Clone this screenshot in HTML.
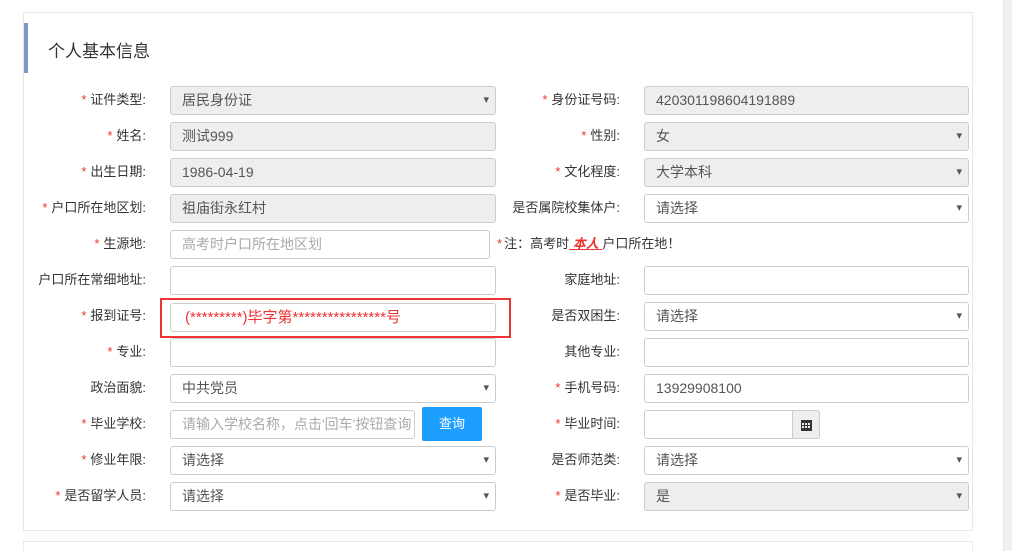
<!DOCTYPE html>
<html><head><meta charset="utf-8"><style>
*{box-sizing:border-box;margin:0;padding:0}
html,body{width:1012px;height:551px;overflow:hidden}
body{background:#fff;position:relative;font-family:"Liberation Sans","Noto Sans CJK SC","Microsoft YaHei",sans-serif;font-size:13px;color:#333}
.sb{position:absolute;left:1003px;top:0;width:9px;height:551px;background:#f1f1f1;border-left:1px solid #e4e4e4}
.panel{position:absolute;left:23px;top:12px;width:950px;height:519px;border:1px solid #e9e9e9;background:#fff}
.panel2{position:absolute;left:23px;top:541px;width:950px;height:10px;border:1px solid #e9e9e9;border-bottom:none}
.bar{position:absolute;left:24px;top:23px;width:4px;height:50px;background:#7e97c8}
.title{position:absolute;left:48px;top:37px;font-size:17px;color:#333}
.lab{position:absolute;text-align:right;line-height:20px;white-space:nowrap}
.lab i{color:#e33;font-style:normal;margin-right:4px}
.in{position:absolute;height:29px;border:1px solid #ccc;border-radius:3px;background:#fff;padding-left:11px;line-height:27px;font-size:14px;color:#555;white-space:nowrap;overflow:hidden}
.dis{background:#eee}
.sel::after{content:"▾";position:absolute;right:6px;top:0;font-size:11px;color:#555}
</style></head><body>
<div class="sb"></div>
<div class="panel"></div><div class="panel2"></div>
<div class="bar"></div><div class="title">个人基本信息</div>

<div class="lab" style="right:866px;top:90px"><i>*</i>证件类型:</div>
<div class="lab" style="right:866px;top:126px"><i>*</i>姓名:</div>
<div class="lab" style="right:866px;top:162px"><i>*</i>出生日期:</div>
<div class="lab" style="right:866px;top:198px"><i>*</i>户口所在地区划:</div>
<div class="lab" style="right:866px;top:234px"><i>*</i>生源地:</div>
<div class="lab" style="right:866px;top:270px">户口所在常细地址:</div>
<div class="lab" style="right:866px;top:306px"><i>*</i>报到证号:</div>
<div class="lab" style="right:866px;top:342px"><i>*</i>专业:</div>
<div class="lab" style="right:866px;top:378px">政治面貌:</div>
<div class="lab" style="right:866px;top:414px"><i>*</i>毕业学校:</div>
<div class="lab" style="right:866px;top:450px"><i>*</i>修业年限:</div>
<div class="lab" style="right:866px;top:486px"><i>*</i>是否留学人员:</div>

<div class="in dis sel" style="left:170px;top:86px;width:326px">居民身份证</div>
<div class="in dis" style="left:170px;top:122px;width:326px">测试999</div>
<div class="in dis" style="left:170px;top:158px;width:326px">1986-04-19</div>
<div class="in dis" style="left:170px;top:194px;width:326px">祖庙街永红村</div>
<div class="in" style="left:170px;top:230px;width:320px;color:#aaa">高考时户口所在地区划</div>
<div class="in" style="left:170px;top:266px;width:326px"></div>
<div class="in" style="left:170px;top:303px;width:326px;color:#e33;font-size:15px;padding-left:14px">(*********)毕字第****************号</div>
<div style="position:absolute;left:160px;top:298px;width:351px;height:40px;border:2px solid #e33"></div>
<div class="in" style="left:170px;top:338px;width:326px"></div>
<div class="in sel" style="left:170px;top:374px;width:326px">中共党员</div>
<div class="in" style="left:170px;top:410px;width:245px;color:#aaa">请输入学校名称，点击'回车'按钮查询</div>
<div style="position:absolute;left:422px;top:407px;width:60px;height:34px;background:#1e9fff;border-radius:2px;color:#fff;text-align:center;line-height:34px;font-size:13px">查询</div>
<div class="in sel" style="left:170px;top:446px;width:326px">请选择</div>
<div class="in sel" style="left:170px;top:482px;width:326px">请选择</div>

<div class="lab" style="right:392px;top:90px"><i>*</i>身份证号码:</div>
<div class="lab" style="right:392px;top:126px"><i>*</i>性别:</div>
<div class="lab" style="right:392px;top:162px"><i>*</i>文化程度:</div>
<div class="lab" style="right:392px;top:198px">是否属院校集体户:</div>
<div class="lab" style="left:497px;top:234px"><i style="margin-right:2px">*</i>注：高考时<span style="color:#e33;font-weight:bold;font-style:italic;text-decoration:underline">&nbsp;本人&nbsp;</span>户口所在地！</div>
<div class="lab" style="right:392px;top:270px">家庭地址:</div>
<div class="lab" style="right:392px;top:306px">是否双困生:</div>
<div class="lab" style="right:392px;top:342px">其他专业:</div>
<div class="lab" style="right:392px;top:378px"><i>*</i>手机号码:</div>
<div class="lab" style="right:392px;top:414px"><i>*</i>毕业时间:</div>
<div class="lab" style="right:392px;top:450px">是否师范类:</div>
<div class="lab" style="right:392px;top:486px"><i>*</i>是否毕业:</div>

<div class="in dis" style="left:644px;top:86px;width:325px">420301198604191889</div>
<div class="in dis sel" style="left:644px;top:122px;width:325px">女</div>
<div class="in dis sel" style="left:644px;top:158px;width:325px">大学本科</div>
<div class="in sel" style="left:644px;top:194px;width:325px">请选择</div>
<div class="in" style="left:644px;top:266px;width:325px"></div>
<div class="in sel" style="left:644px;top:302px;width:325px">请选择</div>
<div class="in" style="left:644px;top:338px;width:325px"></div>
<div class="in" style="left:644px;top:374px;width:325px">13929908100</div>
<div class="in" style="left:644px;top:410px;width:176px;padding:0"></div>
<div style="position:absolute;left:792px;top:410px;width:28px;height:29px;background:#eee;border:1px solid #ccc;border-radius:0 3px 3px 0;text-align:center;padding-top:8px">
<svg width="11" height="11" viewBox="0 0 11 11"><rect x="0" y="0" width="11" height="11" fill="#333"/><g fill="#eee"><rect x="1" y="3" width="2" height="2"/><rect x="4" y="3" width="2" height="2"/><rect x="7" y="3" width="2" height="2"/><rect x="1" y="6" width="2" height="2"/><rect x="4" y="6" width="2" height="2"/><rect x="7" y="6" width="2" height="2"/></g></svg></div>
<div class="in sel" style="left:644px;top:446px;width:325px">请选择</div>
<div class="in dis sel" style="left:644px;top:482px;width:325px">是</div>
</body></html>
